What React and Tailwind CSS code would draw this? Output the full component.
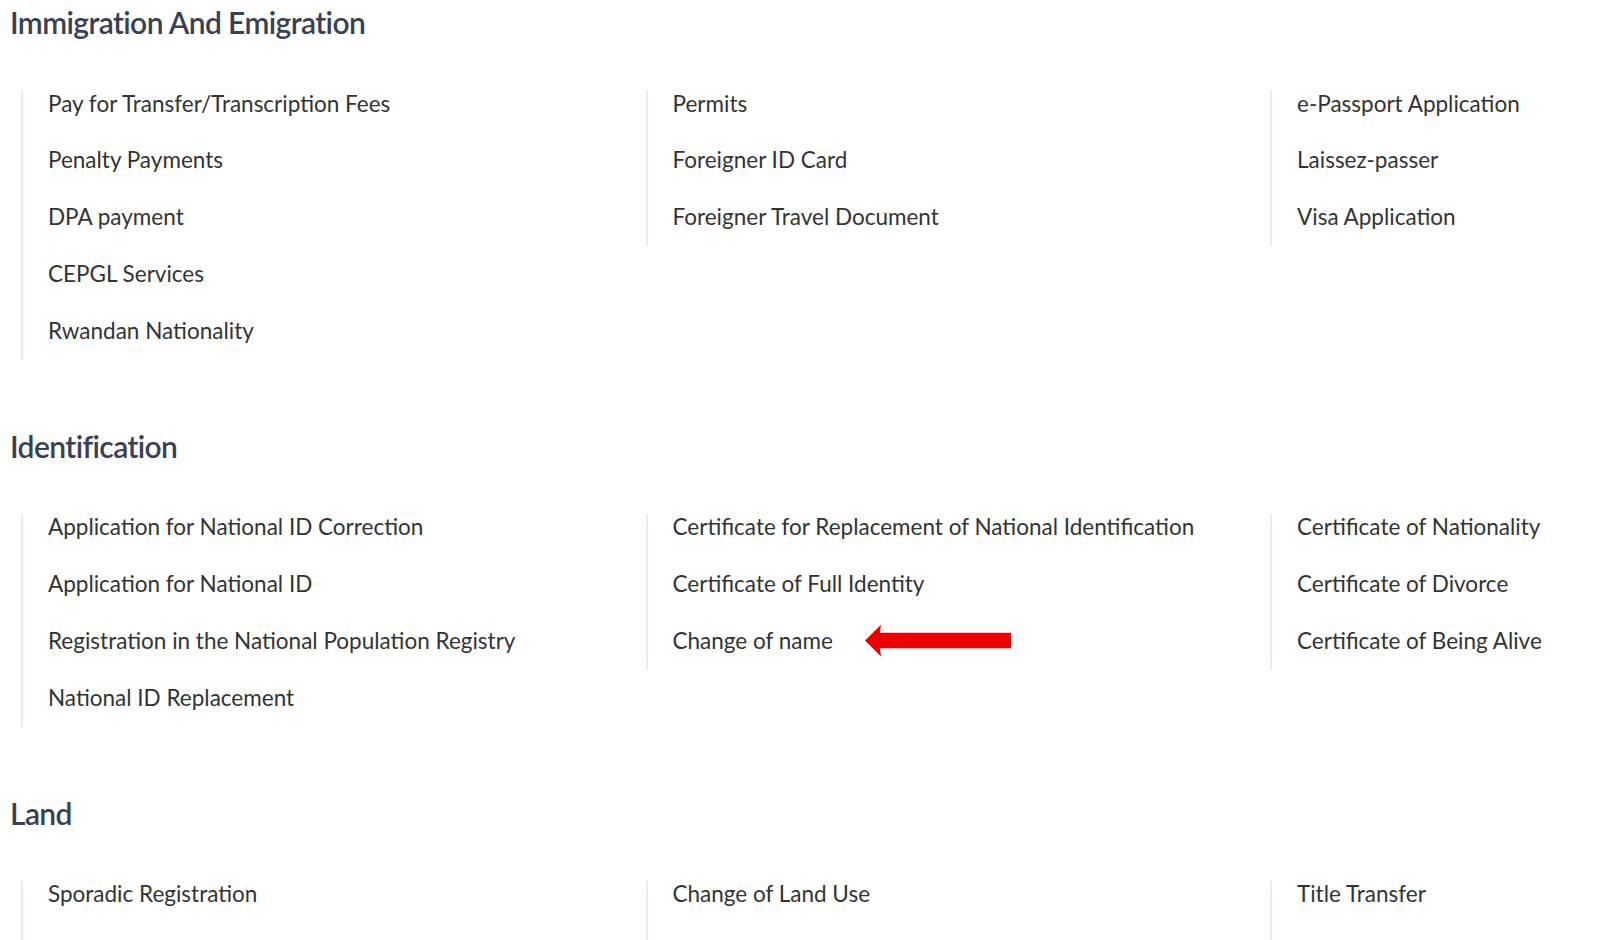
import React from 'react';

const sections = [
  {
    title: 'Immigration And Emigration',
    columns: [
      ['Pay for Transfer/Transcription Fees', 'Penalty Payments', 'DPA payment', 'CEPGL Services', 'Rwandan Nationality'],
      ['Permits', 'Foreigner ID Card', 'Foreigner Travel Document'],
      ['e-Passport Application', 'Laissez-passer', 'Visa Application'],
    ],
  },
  {
    title: 'Identification',
    columns: [
      [
        'Application for National ID Correction',
        'Application for National ID',
        'Registration in the National Population Registry',
        'National ID Replacement',
      ],
      ['Certificate for Replacement of National Identification', 'Certificate of Full Identity', 'Change of name'],
      ['Certificate of Nationality', 'Certificate of Divorce', 'Certificate of Being Alive'],
    ],
  },
  {
    title: 'Land',
    columns: [
      ['Sporadic Registration', 'Emergency Services'],
      ['Change of Land Use', 'Title Rectification'],
      ['Title Transfer', 'Land Valuation'],
    ],
  },
];

// red pointer next to the highlighted service
const RedArrow = () => (
  <svg width="146" height="33" viewBox="0 0 146 33" className="shrink-0 -my-[5px]">
    <path d="M0 16.5 L16 0.8 L15 8.7 L146 8.7 L146 24.2 L15 24.2 L16 32.4 Z" fill="#ee0000" />
  </svg>
);

const ServiceColumn = ({ items }) => (
  <div className="self-start border-l-2 border-[#e6ebf5] pl-[25px] pt-[1.5px] pb-[17px] flex flex-col gap-[32.8px]">
    {items.map(item => (
      <div key={item} className="flex items-center h-[24px] gap-[32px] text-[22.5px] leading-[24px] text-[#333333] whitespace-nowrap">
        <span>{item}</span>
        {item === 'Change of name' && <RedArrow />}
      </div>
    ))}
  </div>
);

const App = () => {
  return (
    <div className="w-[1600px] h-[940px] overflow-hidden bg-white pt-[4px] pl-[10px] font-['Lato','Liberation_Sans',sans-serif]">
      <div className="flex flex-col gap-[68px]">
        {sections.map(section => (
          <section key={section.title}>
            <h2 className="text-[30px] leading-[36px] font-semibold tracking-[-0.6px] text-[#3b3f54]">{section.title}</h2>
            <div className="mt-[50px] ml-[11px] grid grid-cols-[624.5px_624.5px_624.5px]">
              {section.columns.map((col, i) => (
                <ServiceColumn key={i} items={col} />
              ))}
            </div>
          </section>
        ))}
      </div>
    </div>
  );
};

export default App;
